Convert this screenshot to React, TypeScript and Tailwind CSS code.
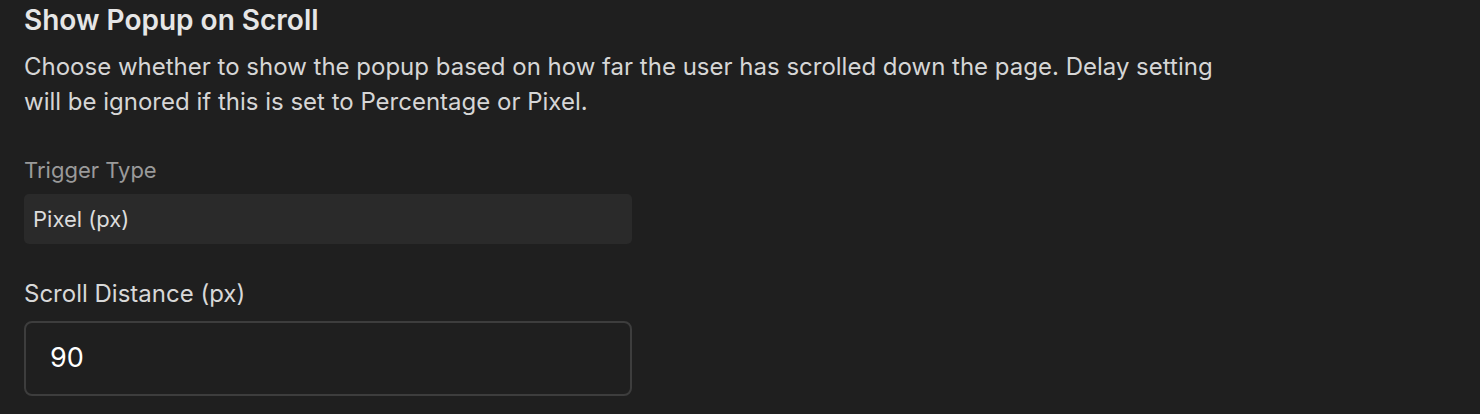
export default function App() {
  return (
    <div className="w-full h-[414px] bg-[#1f1f1f] pl-6 pt-[4px] font-['Inter','Liberation_Sans',sans-serif] overflow-hidden">
      <h2 className="text-[28px] leading-[32px] font-semibold text-[#e6e6e6]">Show Popup on Scroll</h2>
      <p className="mt-[13px] w-[1210px] text-[24px] leading-[35px] text-[#d6d6d6]">
        Choose whether to show the popup based on how far the user has scrolled down the page. Delay setting
        will be ignored if this is set to Percentage or Pixel.
      </p>

      <div className="mt-[37px] flex flex-col w-[608px]">
        <label className="text-[22px] leading-[28px] text-[#9a9a9a]">Trigger Type</label>
        <div className="mt-[10px] h-[50px] rounded-[5px] bg-[#2a2a2a] px-[9px] flex items-center text-[22px] text-[#dcdcdc]">
          Pixel (px)
        </div>
      </div>

      <div className="mt-[36px] flex flex-col w-[608px]">
        <label className="text-[24px] leading-[28px] text-[#d8d8d8]">Scroll Distance (px)</label>
        <div className="mt-[13px] h-[75px] rounded-[8px] border-2 border-[#3d3d3d] pl-[24px] flex items-center text-[27px] text-white">
          90
        </div>
      </div>
    </div>
  )
}
